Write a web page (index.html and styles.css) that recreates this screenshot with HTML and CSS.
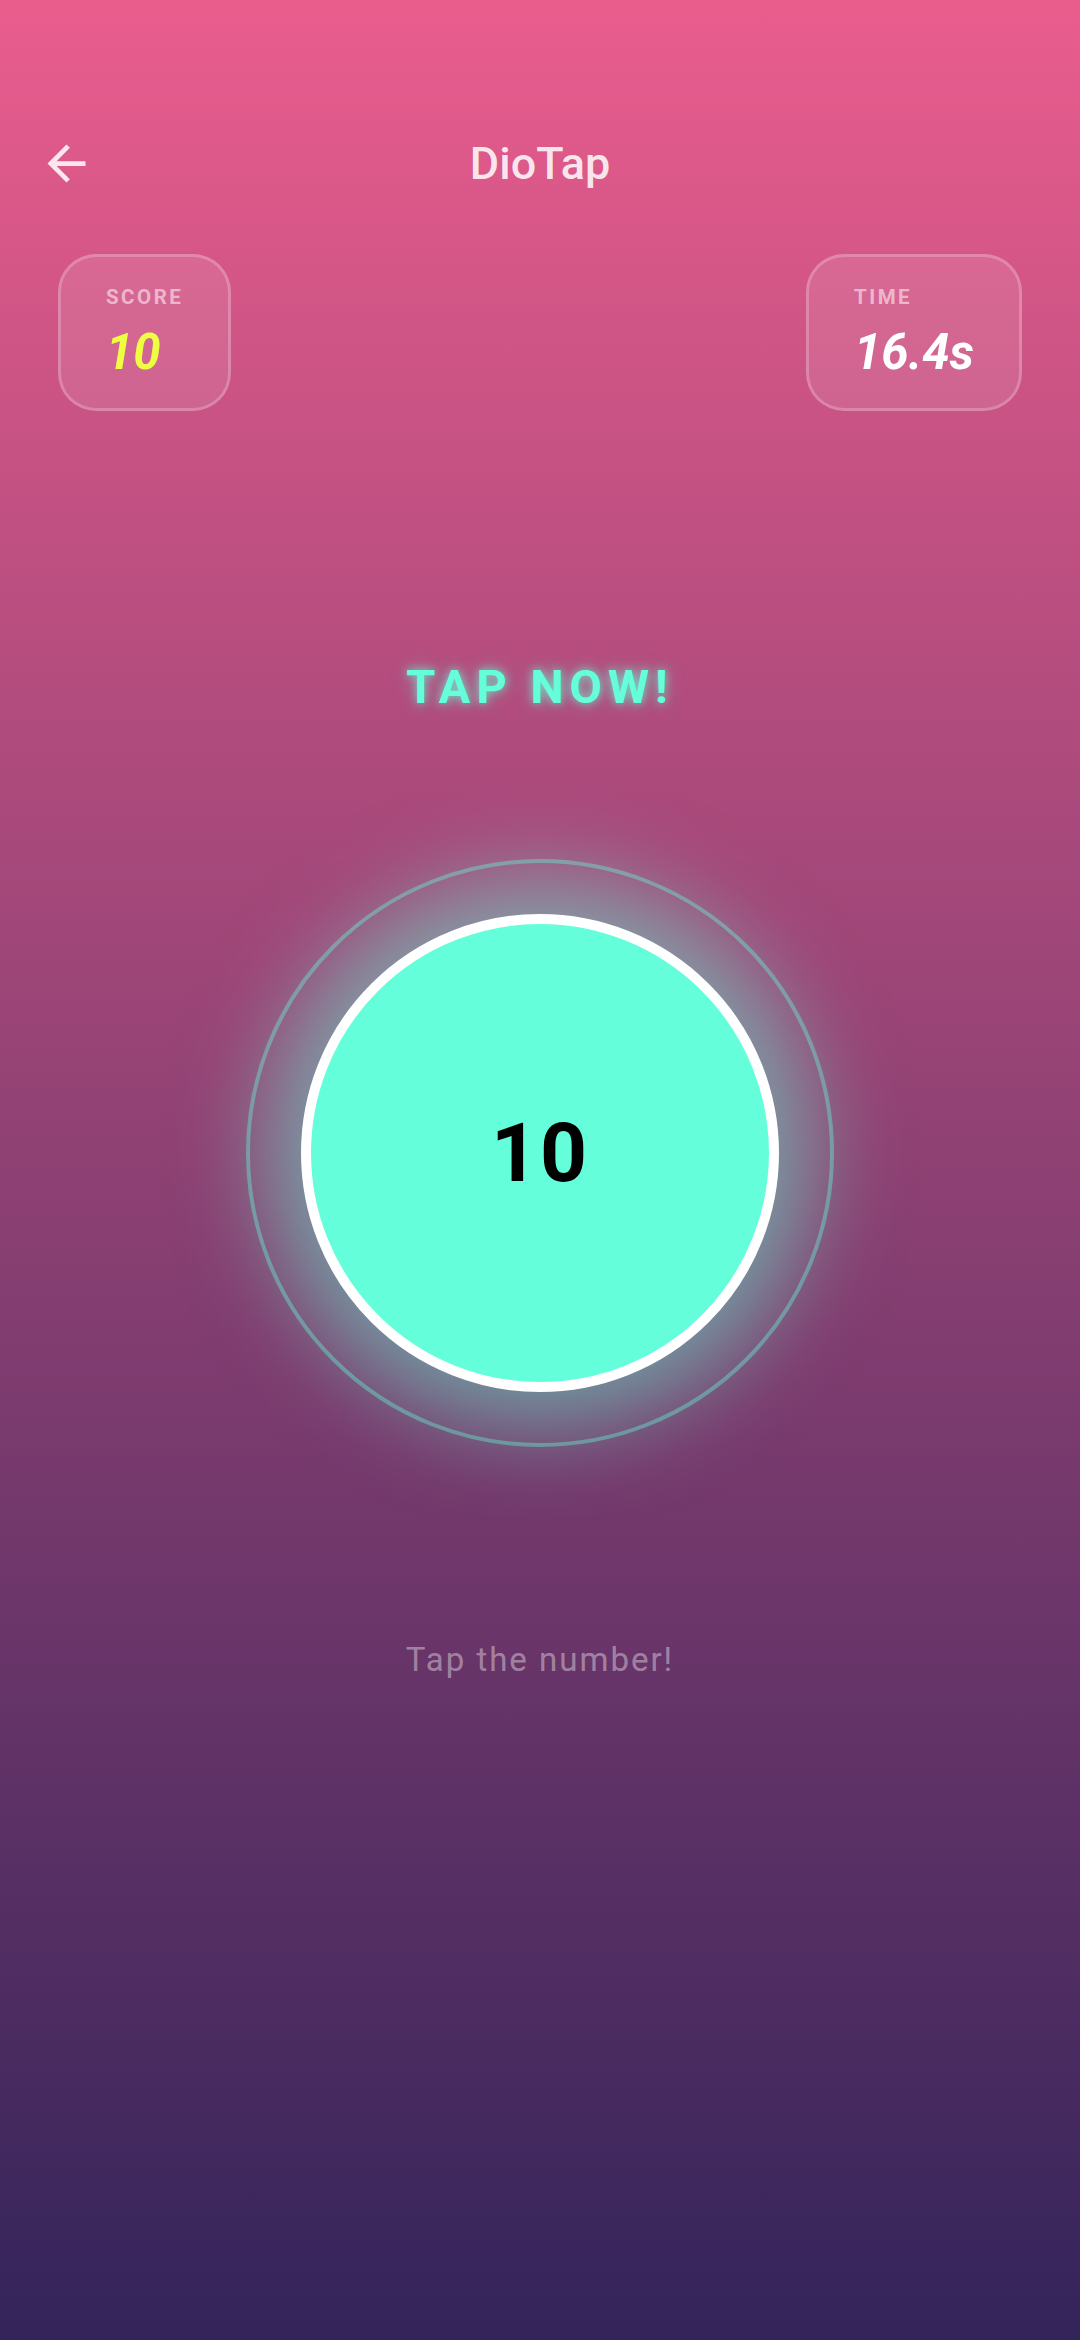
FILE: index.html
```html
<!DOCTYPE html>
<html lang="en">
<head>
    <meta charset="UTF-8">
    <meta name="viewport" content="width=device-width, initial-scale=1.0">
    <title>DioTap</title>
    <link rel="stylesheet" href="styles.css">
</head>
<body>

<div class="screen">
    <header class="app-bar">
        <button class="back-btn" aria-label="Back">
            <svg viewBox="0 0 24 24" width="57" height="57">
                <path d="M20 11H7.83l5.59-5.59L12 4l-8 8 8 8 1.41-1.41L7.83 13H20v-2z" fill="currentColor"/>
            </svg>
        </button>
        <h1 class="title">DioTap</h1>
        <div></div>
    </header>

    <!-- Score / time cards -->
    <div class="stats">
        <div class="stat-card">
            <div class="stat-label">SCORE</div>
            <div class="stat-value score">10</div>
        </div>
        <div class="stat-card">
            <div class="stat-label">TIME</div>
            <div class="stat-value">16.4s</div>
        </div>
    </div>

    <div class="prompt">TAP NOW!</div>

    <div class="target-ring">
        <div class="target">10</div>
    </div>

    <p class="hint">Tap the number!</p>
</div>

</body>
</html>
```

FILE: styles.css
```css
html, body {
    margin: 0;
    padding: 0;
}
body {
    font-family: 'Roboto', 'Noto Sans', sans-serif;
    background: linear-gradient(180deg, #e95d8d 0%, #33245a 100%);
    min-height: 2340px;
    color: #fff;
}
.screen {
    display: flex;
    flex-direction: column;
    align-items: center;
}
.app-bar {
    width: 100%;
    height: 118px;
    margin-top: 104px;
    display: grid;
    grid-template-columns: 1fr auto 1fr;
    align-items: center;
}
.back-btn {
    background: none;
    border: none;
    padding: 0;
    margin-left: 38px;
    width: 57px;
    height: 57px;
    color: rgba(255, 255, 255, 0.85);
    cursor: pointer;
}
.back-btn svg {
    display: block;
}
.title {
    margin: 0;
    font-size: 45px;
    font-weight: 500;
    color: rgba(255, 255, 255, 0.85);
}
.stats {
    width: 100%;
    box-sizing: border-box;
    padding: 0 58px;
    margin-top: 32px;
    display: flex;
    justify-content: space-between;
    align-items: flex-start;
}
.stat-card {
    display: flex;
    flex-direction: column;
    align-items: flex-start;
    gap: 15px;
    padding: 28px 45px 27px;
    background: rgba(255, 255, 255, 0.1);
    border: 3px solid rgba(255, 255, 255, 0.22);
    border-radius: 38px;
}
.stat-label {
    font-size: 20.5px;
    font-weight: 700;
    letter-spacing: 2.5px;
    color: rgba(255, 255, 255, 0.55);
}
.stat-value {
    font-size: 49px;
    font-weight: 700;
    font-style: italic;
    color: #fff;
}
.stat-value.score {
    color: #eeff41;
}
.prompt {
    margin-top: 248px;
    font-size: 47px;
    font-weight: 700;
    letter-spacing: 6px;
    color: #64ffda;
    text-shadow: 0 0 10px rgba(100, 255, 218, 0.8), 0 0 20px rgba(100, 255, 218, 0.4);
}
.target-ring {
    margin-top: 145px;
    width: 588px;
    height: 588px;
    box-sizing: border-box;
    border: 4px solid rgba(100, 255, 218, 0.38);
    border-radius: 50%;
    display: flex;
    align-items: center;
    justify-content: center;
}
.target {
    width: 478px;
    height: 478px;
    box-sizing: border-box;
    border: 10px solid #fff;
    border-radius: 50%;
    background: #64ffda;
    display: flex;
    align-items: center;
    justify-content: center;
    font-size: 82px;
    font-weight: 700;
    letter-spacing: 2px;
    color: #000;
    box-shadow: 0 0 90px 35px rgba(100, 255, 218, 0.5);
}
.hint {
    margin: 193px 0 0;
    font-size: 33px;
    letter-spacing: 2px;
    color: rgba(255, 255, 255, 0.4);
}
```
